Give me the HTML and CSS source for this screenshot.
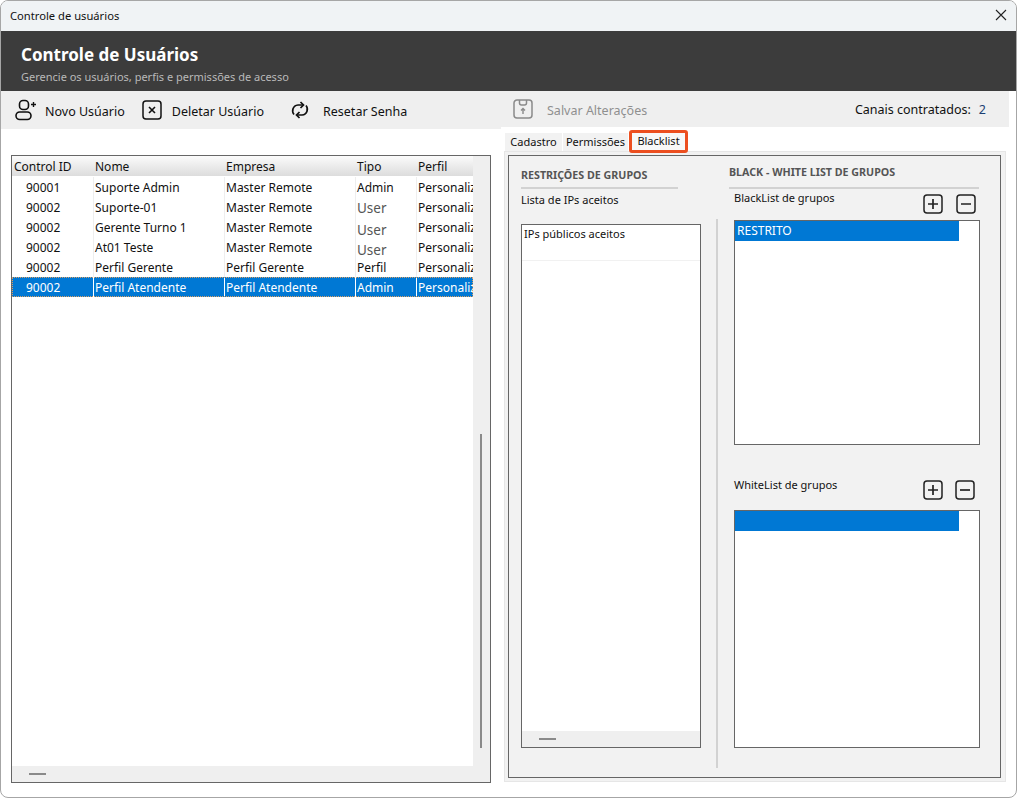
FILE: index.html
```html
<!DOCTYPE html>
<html lang="pt-BR">
<head>
    <meta charset="UTF-8">
    <title>Controle de usuários</title>
    <link rel="stylesheet" href="styles.css">
</head>
<body>
    <div class="window">
        <div class="titlebar">
            <span>Controle de usuários</span>
            <svg class="close" width="12" height="12" viewBox="0 0 12 12"><path d="M1 1l10 10M11 1L1 11" stroke="#222" stroke-width="1.1" fill="none"/></svg>
        </div>
        <div class="banner">
            <h1>Controle de Usuários</h1>
            <p>Gerencie os usuários, perfis e permissões de acesso</p>
        </div>
        <div class="main">
            <div class="left">
                <div class="toolbar">
                    <div class="tool tool-new">
                        <svg width="22" height="22" viewBox="0 0 22 22" fill="none" stroke="#111" stroke-width="1.6"><rect x="4.5" y="1.5" width="9" height="9" rx="3.5"/><rect x="1" y="13" width="15" height="7.5" rx="3.7"/><path d="M16 5.5h5M18.5 3v5" stroke-width="1.4"/></svg>
                        <span>Novo Usúario</span>
                    </div>
                    <div class="tool tool-del">
                        <svg width="20" height="20" viewBox="0 0 20 20" fill="none" stroke="#111" stroke-width="1.5"><rect x="1" y="1" width="18" height="18" rx="3"/><path d="M7 7l6 6M13 7l-6 6" stroke-width="1.6"/></svg>
                        <span>Deletar Usúario</span>
                    </div>
                    <div class="tool tool-reset">
                        <svg width="20" height="20" viewBox="0 0 20 20" fill="none" stroke="#111" stroke-width="1.7"><path d="M4 14.5C1.5 11.5 2.5 5.5 8 5h5"/><path d="M10.5 2l3 3-3 3"/><path d="M16 5.5c2.5 3 1.500 9-4 9.500H7"/><path d="M9.500 18l-3-3 3-3"/></svg>
                        <span>Resetar Senha</span>
                    </div>
                </div>
                <div class="table">
                    <div class="table-body">
                        <div class="row row-head">
                            <div>Control ID</div><div>Nome</div><div>Empresa</div><div>Tipo</div><div>Perfil</div>
                        </div>
                        <div class="row">
                            <div class="id">90001</div><div>Suporte Admin</div><div>Master Remote</div><div>Admin</div><div>Personalizado</div>
                        </div>
                        <div class="row">
                            <div class="id">90002</div><div>Suporte-01</div><div>Master Remote</div><div class="user">User</div><div>Personalizado</div>
                        </div>
                        <div class="row">
                            <div class="id">90002</div><div>Gerente Turno 1</div><div>Master Remote</div><div class="user low">User</div><div>Personalizado</div>
                        </div>
                        <div class="row">
                            <div class="id">90002</div><div>At01 Teste</div><div>Master Remote</div><div class="user low">User</div><div>Personalizado</div>
                        </div>
                        <div class="row">
                            <div class="id">90002</div><div>Perfil Gerente</div><div>Perfil Gerente</div><div>Perfil</div><div>Personalizado</div>
                        </div>
                        <div class="row selected">
                            <div class="id">90002</div><div>Perfil Atendente</div><div>Perfil Atendente</div><div>Admin</div><div>Personalizado</div>
                        </div>
                    </div>
                    <div class="vscroll"><i></i></div>
                    <div class="hscroll"><i></i></div>
                </div>
            </div>
            <div class="right">
                <div class="toolbar toolbar-right">
                    <div class="tool tool-save">
                        <svg width="20" height="20" viewBox="0 0 20 20" fill="none" stroke="#8a8a8a" stroke-width="1.5"><path d="M4 1h12a3 3 0 0 1 3 3v12a3 3 0 0 1-3 3H4a3 3 0 0 1-3-3V4a3 3 0 0 1 3-3z"/><path d="M6.500 1v3a2 2 0 0 0 2 2h3a2 2 0 0 0 2-2V1"/><path d="M10 15v-5M8 11.500l2-2 2 2" stroke-width="1.400"/></svg>
                        <span>Salvar Alterações</span>
                    </div>
                    <div class="channels"><span>Canais contratados:</span><span class="channels-count">2</span></div>
                </div>
                <div class="tabs">
                    <div class="tab tab-cad">Cadastro</div>
                    <div class="tab tab-perm">Permissões</div>
                    <div class="tab tab-active">Blacklist</div>
                </div>
                <div class="panel">
                    <div class="panel-inner">
                        <div class="col-ips">
                            <h2>RESTRIÇÕES DE GRUPOS</h2>
                            <div class="label">Lista de IPs aceitos</div>
                            <div class="listbox ip-list">
                                <div class="ip-head">IPs públicos aceitos</div>
                                <div class="ip-rows"></div>
                                <div class="hscroll"><i></i></div>
                            </div>
                        </div>
                        <div class="divider"></div>
                        <div class="col-groups">
                            <h2>BLACK - WHITE LIST DE GRUPOS</h2>
                            <div class="group-head black-head">
                                <div class="label">BlackList de grupos</div>
                                <div class="btns">
                                    <svg width="20" height="20" viewBox="0 0 20 20" fill="none" stroke="#222" stroke-width="1.500"><rect x="1" y="1" width="18" height="18" rx="3"/><path d="M10 5v10M5 10h10" stroke-width="1.700"/></svg>
                                    <svg width="20" height="20" viewBox="0 0 20 20" fill="none" stroke="#222" stroke-width="1.500"><rect x="1" y="1" width="18" height="18" rx="3"/><path d="M5 10h10" stroke-width="1.700"/></svg>
                                </div>
                            </div>
                            <div class="listbox black-list">
                                <div class="item">RESTRITO</div>
                            </div>
                            <div class="group-head white-head">
                                <div class="label">WhiteList de grupos</div>
                                <div class="btns">
                                    <svg width="20" height="20" viewBox="0 0 20 20" fill="none" stroke="#222" stroke-width="1.500"><rect x="1" y="1" width="18" height="18" rx="3"/><path d="M10 5v10M5 10h10" stroke-width="1.700"/></svg>
                                    <svg width="20" height="20" viewBox="0 0 20 20" fill="none" stroke="#222" stroke-width="1.500"><rect x="1" y="1" width="18" height="18" rx="3"/><path d="M5 10h10" stroke-width="1.700"/></svg>
                                </div>
                            </div>
                            <div class="listbox white-list">
                                <div class="item"></div>
                            </div>
                        </div>
                    </div>
                </div>
            </div>
        </div>
    </div>
</body>
</html>
```
FILE: styles.css
```css
html, body {
    margin: 0;
    height: 100%;
    background: #fff;
}
body {
    font-family: "Noto Sans", "Open Sans", Arial, sans-serif;
    font-size: 12px;
    color: #111;
    overflow: hidden;
}
.window {
    box-sizing: border-box;
    width: 1017px;
    height: 798px;
    border: 1px solid #a6a6a6;
    border-radius: 8px;
    overflow: hidden;
    display: flex;
    flex-direction: column;
    background: #fff;
}
.titlebar {
    height: 30px;
    flex: none;
    display: flex;
    align-items: center;
    justify-content: space-between;
    padding: 0 9px 2px;
    box-sizing: border-box;
    background: #f0f3f5;
    font-size: 11.2px;
}
.banner {
    height: 60px;
    flex: none;
    box-sizing: border-box;
    padding: 13px 20px 0;
    background: #3c3c3c;
}
.banner h1 {
    margin: 0;
    font-size: 17px;
    line-height: 22px;
    color: #fff;
    font-weight: bold;
}
.banner p {
    margin: 2px 0 0;
    font-size: 11px;
    line-height: 18px;
    color: #b9b9b9;
}
.main {
    flex: 1;
    display: flex;
    min-height: 0;
}
.left {
    width: 500px;
    flex: none;
    display: flex;
    flex-direction: column;
}
.right {
    flex: 1;
    display: flex;
    flex-direction: column;
    min-width: 0;
}
.toolbar {
    height: 38px;
    flex: none;
    display: flex;
    align-items: center;
    background: #efefef;
}
.toolbar-right {
    height: 36px;
    margin-right: 7px;
    justify-content: space-between;
}
.tool {
    display: flex;
    align-items: center;
    font-size: 12.5px;
}
.tool span {
    margin-top: 2px;
}
.tool-new {
    margin-left: 14px;
    gap: 8px;
}
.tool-del {
    margin-left: 17px;
    gap: 10px;
}
.tool-reset {
    margin-left: 26px;
    gap: 13px;
}
.tool-save {
    margin-left: 12px;
    gap: 14px;
    color: #8f8f8f;
}
.channels {
    display: flex;
    gap: 8px;
    margin-right: 23px;
    font-size: 12.5px;
}
.channels-count {
    color: #1c3f73;
}
.table {
    box-sizing: border-box;
    width: 480px;
    height: 628px;
    margin: 26px 0 0 10px;
    border: 1px solid #666;
    display: grid;
    grid-template-columns: 1fr 17px;
    grid-template-rows: 1fr 16px;
    background: #efefef;
}
.table-body {
    background: #fff;
    overflow: hidden;
}
.row {
    display: grid;
    grid-template-columns: 81px 131px 131px 61px 57px;
    height: 20px;
    line-height: 22px;
}
.row > div {
    box-sizing: border-box;
    padding-left: 1px;
    border-left: 1px solid #eee;
    white-space: nowrap;
    overflow: hidden;
}
.row > div:first-child {
    border-left: 0;
}
.row-head {
    background: linear-gradient(#fbfbfb, #dcdcdc);
    margin-bottom: 1px;
}
.row-head > div {
    border-left: 0;
    padding-left: 2px;
}
.row .id {
    padding-left: 14px;
}
.row .user {
    color: #555;
    font-size: 13.5px;
}
.row .low {
    padding-top: 2px;
}
.selected {
    background: #0078d4;
    color: #fff;
    outline: 1px dotted #d9a066;
    outline-offset: -1px;
}
.row.selected > div {
    border-left-color: #fff;
}
.vscroll {
    position: relative;
}
.vscroll i {
    position: absolute;
    left: 7px;
    top: 278px;
    bottom: 34px;
    width: 2px;
    background: #8a8a8a;
}
.table .vscroll {
    grid-row: 1 / 3;
    grid-column: 2;
}
.hscroll {
    height: 16px;
    background: #efefef;
    display: flex;
    align-items: center;
}
.hscroll i {
    width: 17px;
    height: 2px;
    margin-left: 17px;
    background: #8a8a8a;
}
.tabs {
    display: flex;
    align-items: flex-end;
    height: 24px;
    padding-left: 4px;
    flex: none;
}
.tab {
    box-sizing: border-box;
    height: 18px;
    line-height: 18px;
    margin-right: 1px;
    text-align: center;
    background: #f2f2f2;
    font-size: 11px;
}
.tab-cad {
    width: 57px;
}
.tab-perm {
    width: 65px;
}
.tab-active {
    position: relative;
    width: 59px;
    height: 23px;
    line-height: 16px;
    margin-bottom: -2px;
    background: #f8f8f8;
    border: 3px solid #ec4f20;
    border-radius: 3px;
    z-index: 1;
}
.panel {
    box-sizing: border-box;
    width: 502px;
    height: 631px;
    margin-left: 3px;
    padding: 3px;
    background: #f2f2f2;
    border: 1px solid #e6e6e6;
}
.panel-inner {
    box-sizing: border-box;
    width: 493px;
    height: 100%;
    border: 1px solid #666;
    display: grid;
    grid-template-columns: 180px 3px 249px;
    padding: 12px 0 0 12px;
}
.panel h2 {
    margin: 0;
    border-bottom: 2px solid #d2d2d2;
    font-size: 10.7px;
    line-height: 16px;
    font-weight: bold;
    color: #555;
}
.col-ips h2 {
    width: 157px;
    margin-top: -1px;
    padding-bottom: 4px;
}
.label {
    font-size: 11px;
    line-height: 16px;
}
.col-ips .label {
    margin-top: 3px;
}
.listbox {
    box-sizing: border-box;
    background: #fff;
    border: 1px solid #666;
}
.ip-list {
    width: 180px;
    height: 524px;
    margin-top: 16px;
    display: flex;
    flex-direction: column;
}
.ip-head {
    height: 36px;
    flex: none;
    box-sizing: border-box;
    padding: 0 2px;
    line-height: 17px;
    font-size: 11px;
    border-bottom: 1px solid #f1f1f1;
}
.ip-rows {
    flex: 1;
}
.divider {
    width: 2px;
    height: 549px;
    margin: 51px 0 0 15px;
    background: #d2d2d2;
}
.col-groups {
    margin-left: 25px;
    width: 251px;
}
.col-groups h2 {
    margin-top: -4px;
    padding-bottom: 7px;
    width: 250px;
}
.group-head {
    display: flex;
    justify-content: space-between;
    width: 242px;
    padding-left: 5px;
}
.black-head {
    height: 30px;
    padding-top: 1px;
}
.white-head {
    height: 30px;
    margin-top: 35px;
}
.white-head .label {
    margin-top: -3px;
}
.btns {
    display: flex;
    gap: 13px;
    padding-top: 4px;
}
.white-head .btns {
    gap: 12px;
    padding-top: 0;
    margin-right: 1px;
}
.col-groups .listbox {
    width: 246px;
    margin-left: 5px;
    padding: 0 20px 0 0;
}
.black-list {
    height: 225px;
}
.white-list {
    height: 238px;
}
.item {
    height: 20px;
    line-height: 20px;
    padding-left: 2px;
    background: #0078d4;
    color: #fff;
    font-size: 12px;
}
```
